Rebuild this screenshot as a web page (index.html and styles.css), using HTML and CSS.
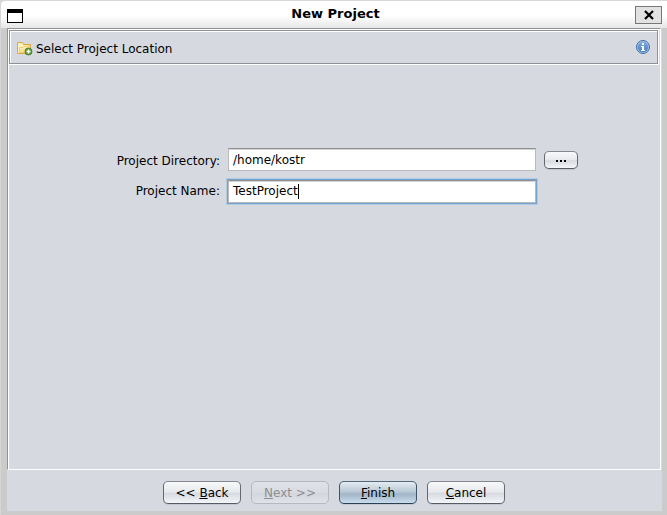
FILE: index.html
```html
<!DOCTYPE html>
<html lang="en">
<head>
<meta charset="utf-8">
<title>New Project</title>
<link rel="stylesheet" href="styles.css">
</head>
<body>
<div class="window">
  <header class="titlebar">
    <span class="menu-icon"></span>
    <h1 class="title">New Project</h1>
    <button class="close" aria-label="Close"><svg width="10" height="10" viewBox="0 0 10 10"><path d="M1 1L9 9M9 1L1 9" stroke="#000" stroke-width="2.2"/></svg></button>
  </header>
  <main class="content">
    <section class="page">
      <div class="page-inner">
        <div class="heading">
          <div class="heading-inner">
            <svg class="folder" width="16" height="16" viewBox="0 0 16 16">
              <defs><linearGradient id="fold" x1="0" y1="0" x2="1" y2="1"><stop offset="0" stop-color="#fffbe0"/><stop offset="1" stop-color="#efc63f"/></linearGradient></defs>
              <path d="M.5 12.500V1.500H5.500L6.500 3.500H13.500V12.500Z" fill="#fff3bd" stroke="#d9a843"/>
              <path d="M2.500 11.500V6.500H6L7 5H13V11.500Z" fill="url(#fold)" stroke="#e8c566" stroke-width=".8"/>
              <circle cx="11.500" cy="10.500" r="3.500" fill="#5c9f3c" stroke="#42752c" stroke-width=".8"/>
              <path d="M9.500 10.500h4M11.500 8.500v4" stroke="#fff" stroke-width="1.400"/>
            </svg>
            <span class="heading-text">Select Project Location</span>
            <svg class="info" width="14" height="14" viewBox="0 0 14 14">
              <defs><linearGradient id="blue" x1="0" y1="0" x2="0" y2="1"><stop offset="0" stop-color="#7fa9da"/><stop offset="1" stop-color="#4a80c0"/></linearGradient></defs>
              <circle cx="7" cy="7" r="6.500" fill="#a9c6e8" stroke="#3c6ca9"/>
              <circle cx="7" cy="7" r="5.300" fill="url(#blue)"/>
              <path d="M6 3h2v2H6zM5 6h3v4h1v1H5v-1h1V7H5z" fill="#fff"/>
            </svg>
          </div>
        </div>
        <form class="form">
          <label class="label dir-label">Project Directory:</label>
          <div class="field">/home/kostr</div>
          <button type="button" class="button browse" aria-label="Browse"><i></i><i></i><i></i></button>
          <label class="label">Project Name:</label>
          <div class="field focused">TestProject<span class="caret"></span></div>
        </form>
      </div>
    </section>
    <footer class="actions">
      <button class="button">&lt;&lt; <u>B</u>ack</button>
      <button class="button disabled"><u>N</u>ext &gt;&gt;</button>
      <button class="button primary"><u>F</u>inish</button>
      <button class="button"><u>C</u>ancel</button>
    </footer>
  </main>
</div>
</body>
</html>
```

FILE: styles.css
```css
* { box-sizing: border-box; }
body {
  margin: 0;
  width: 667px;
  height: 515px;
  overflow: hidden;
  background: #d6d6d6;
  font: 12px/16px "DejaVu Sans", sans-serif;
  color: #000;
}
.window {
  height: 515px;
  padding: 1px 0 0 1px;
}
.titlebar {
  display: flex;
  align-items: center;
  height: 27px;
  padding: 0 5px 0 6px;
  border-radius: 4px 0 0 0;
  background: linear-gradient(#fff 55%, #e6e6e6);
}
.menu-icon {
  width: 16px;
  height: 14px;
  margin-top: 2px;
  border: 1px solid #000;
  border-top-width: 4px;
  background: #fff;
}
.title {
  flex: 1;
  margin: 0 0 2px 13px;
  text-align: center;
  font-size: 13px;
  line-height: 16px;
  font-weight: bold;
}
.close {
  display: flex;
  align-items: center;
  justify-content: center;
  width: 27px;
  height: 18px;
  margin-top: 1px;
  padding: 0;
  border: 1px solid #777;
  background: #e2e2e2;
}
.content {
  display: flex;
  flex-direction: column;
  height: 487px;
  padding: 0 5px 4px 6px;
  background: #d6d9e0;
  border: solid #cbcbcb;
  border-width: 0 5px 4px 6px;
  padding: 0;
}
.page {
  height: 442px;
  margin-right: 1px;
  border: solid #8f9198;
  border-width: 1px 0 0 1px;
  border-bottom: 1px solid #fff;
  border-right: 1px solid #fff;
}
.page-inner {
  height: 440px;
  border: solid #fff;
  border-width: 1px 0 0 1px;
}
.heading {
  width: 650px;
  height: 35px;
  border: solid #fff;
  border-width: 0 1px 1px 0;
}
.heading-inner {
  display: flex;
  align-items: center;
  height: 34px;
  padding: 0 7px;
  border: 1px solid #8f9198;
  box-shadow: inset 1px 1px #fff;
}
.folder { margin: 3px 3px 0 0; }
.heading-text { flex: 1; margin-top: 3px; }
.form {
  display: grid;
  grid-template-columns: 211px 308px 34px;
  grid-template-rows: 23px 24px;
  column-gap: 8px;
  row-gap: 8px;
  margin-top: 83px;
  align-items: center;
}
.label { text-align: right; }
.dir-label { padding-top: 3px; }
.field {
  display: flex;
  align-items: center;
  height: 23px;
  padding: 0 4px;
  border: 1px solid #b9babe;
  border-top: 1px solid #8d8e91;
  background: #fff;
  box-shadow: inset 0 1px #d5d5d7;
}
.focused {
  box-shadow: inset 0 1px #d5d5d7, 0 0 0 1px #73a4d1, 0 0 0 2px #b5c9df;
}
.caret { width: 1px; height: 15px; background: #000; }
.button {
  width: 78px;
  height: 23px;
  padding: 0;
  border: 1px solid;
  border-color: #84888f #646970 #555c65;
  border-radius: 5px;
  background: linear-gradient(#f8f9fa, #e7e9ed 48%, #d7dae1 54%, #f3f5f8);
  box-shadow: 0 1px #c3c6cd;
  font: inherit;
  color: #000;
}
.browse {
  display: flex;
  align-items: center;
  justify-content: center;
  gap: 2px;
  width: 34px;
  height: 18px;
}
.browse i { width: 2px; height: 2px; margin-top: 2px; background: #000; }
.actions {
  display: flex;
  gap: 10px;
  padding: 11px 0 0 156px;
}
.disabled {
  color: #8e8f91;
  border-color: #b5b8bf;
  background: linear-gradient(#dfe2e8, #d8dbe1 50%, #d3d6dd 55%, #dfe2e8);
  box-shadow: none;
}
.primary {
  border-color: #53697d #3e5366 #2b4052;
  background: linear-gradient(#e5ecf2, #b9c9d6 45%, #a2b6c7 58%, #c8dced);
}
u { text-underline-offset: 1px; text-decoration-skip-ink: none; }
```
